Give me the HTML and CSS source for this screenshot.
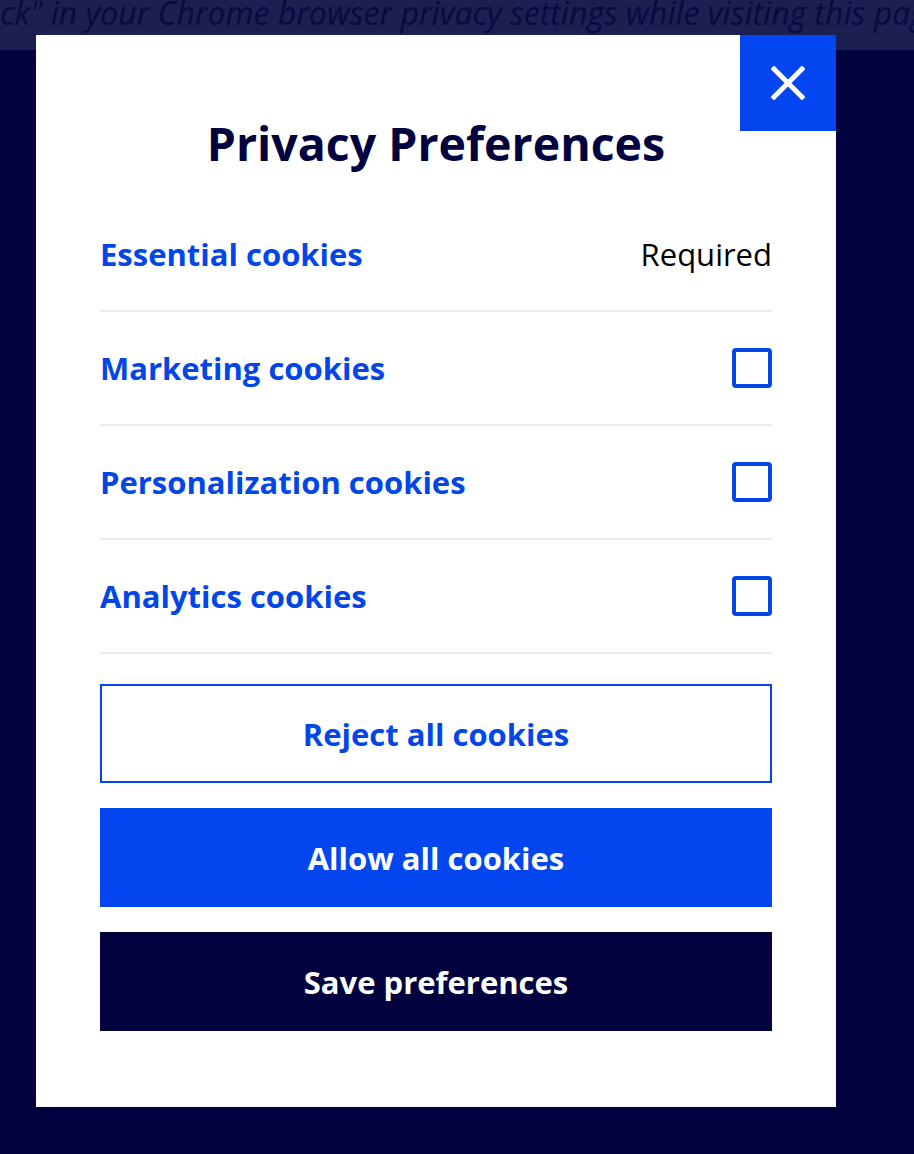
FILE: index.html
```html
<!DOCTYPE html>
<html lang="en">
<head>
    <meta charset="UTF-8">
    <meta name="viewport" content="width=device-width, initial-scale=1.0">
    <title>Privacy Preferences</title>
    <link rel="stylesheet" href="styles.css">
</head>
<body>

<div class="notice">ck" in your Chrome browser privacy settings while visiting this page.</div>

<div class="overlay">
    <div class="modal" role="dialog" aria-labelledby="prefsTitle">
        <button class="close-btn" aria-label="Close">
            <svg width="34" height="34" viewBox="0 0 34 34">
                <path d="M3 3 L31 31 M31 3 L3 31" stroke="#fff" stroke-width="5" stroke-linecap="square"/>
            </svg>
        </button>

        <h2 id="prefsTitle">Privacy Preferences</h2>

        <ul class="cookie-list">
            <li class="cookie-row">
                <span class="cookie-name">Essential cookies</span>
                <span class="required">Required</span>
            </li>
            <li class="cookie-row">
                <label class="cookie-name" for="marketing">Marketing cookies</label>
                <input type="checkbox" id="marketing" class="cookie-check">
            </li>
            <li class="cookie-row">
                <label class="cookie-name" for="personalization">Personalization cookies</label>
                <input type="checkbox" id="personalization" class="cookie-check">
            </li>
            <li class="cookie-row">
                <label class="cookie-name" for="analytics">Analytics cookies</label>
                <input type="checkbox" id="analytics" class="cookie-check">
            </li>
        </ul>

        <div class="actions">
            <button class="btn btn-outline">Reject all cookies</button>
            <button class="btn btn-primary">Allow all cookies</button>
            <button class="btn btn-dark">Save preferences</button>
        </div>
    </div>
</div>

</body>
</html>
```

FILE: styles.css
```css
body {
    margin: 0;
    font-family: "Open Sans", "Noto Sans", sans-serif;
    background-color: #02023f;
    color: #02023f;
}
.notice {
    height: 50px;
    background-color: #1b1f51;
    color: #080a42;
    font-style: italic;
    font-size: 32px;
    line-height: 26px;
    white-space: nowrap;
    overflow: hidden;
}
.overlay {
    position: fixed;
    top: 0;
    left: 0;
    right: 0;
    bottom: 0;
    padding: 35px 0 0 36px;
}
.modal {
    position: relative;
    width: 800px;
    box-sizing: border-box;
    background-color: #fff;
    padding: 80px 64px 76px;
}
.close-btn {
    position: absolute;
    top: 0;
    right: 0;
    width: 96px;
    height: 96px;
    border: none;
    background-color: #0346f0;
    display: flex;
    align-items: center;
    justify-content: center;
    cursor: pointer;
    padding: 0;
}
h2 {
    margin: 0 0 23px;
    text-align: center;
    font-size: 46.5px;
    font-weight: 700;
    line-height: 57px;
    padding-bottom: 3px;
    color: #02023f;
}
.cookie-list {
    list-style: none;
    margin: 0;
    padding: 0;
}
.cookie-row {
    height: 112px;
    border-bottom: 2px solid #ececec;
    display: flex;
    align-items: center;
    justify-content: space-between;
}
.cookie-name {
    font-size: 31px;
    font-weight: 700;
    color: #0346e8;
}
.required {
    font-size: 31px;
    color: #000;
}
.cookie-check {
    appearance: none;
    margin: 0;
    width: 40px;
    height: 40px;
    border: 4px solid #0346e8;
    border-radius: 4px;
    background: #fff;
}
.actions {
    display: flex;
    flex-direction: column;
    gap: 25px;
    margin-top: 30px;
}
.btn {
    height: 99px;
    width: 100%;
    border: none;
    font-family: inherit;
    font-size: 31px;
    font-weight: 700;
    cursor: pointer;
}
.btn-outline {
    background-color: #fff;
    border: 2px solid #0346e8;
    color: #0346e8;
}
.btn-primary {
    background-color: #0346f0;
    color: #fff;
}
.btn-dark {
    background-color: #02023f;
    color: #fff;
}
```
